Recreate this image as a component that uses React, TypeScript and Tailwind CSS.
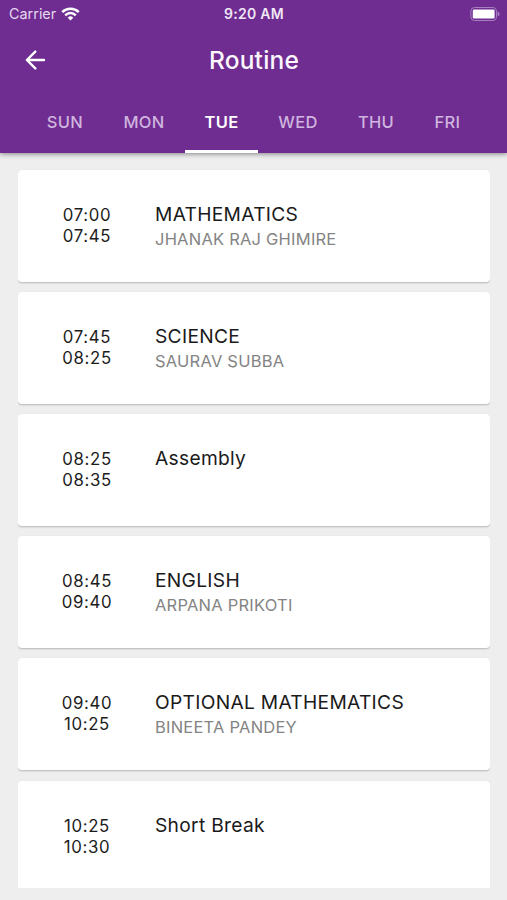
import React, { useState } from 'react';

interface Period {
  start: string;
  end: string;
  subject: string;
  teacher?: string;
}

const days = [
  { name: 'SUN', width: 'w-[76px]' },
  { name: 'MON', width: 'w-[82px]' },
  { name: 'TUE', width: 'w-[73px]' },
  { name: 'WED', width: 'w-[80px]' },
  { name: 'THU', width: 'w-[76px]' },
  { name: 'FRI', width: 'w-[67px]' },
];

const periods: Period[] = [
  { start: '07:00', end: '07:45', subject: 'MATHEMATICS', teacher: 'JHANAK RAJ GHIMIRE' },
  { start: '07:45', end: '08:25', subject: 'SCIENCE', teacher: 'SAURAV SUBBA' },
  { start: '08:25', end: '08:35', subject: 'Assembly' },
  { start: '08:45', end: '09:40', subject: 'ENGLISH', teacher: 'ARPANA PRIKOTI' },
  { start: '09:40', end: '10:25', subject: 'OPTIONAL MATHEMATICS', teacher: 'BINEETA PANDEY' },
  { start: '10:25', end: '10:30', subject: 'Short Break' },
];

const StatusBar: React.FC = () => (
  <div className="grid h-[27px] grid-cols-3 items-center pl-[9px] pr-[7px]">
    <div className="flex items-center gap-[5px]">
      <span className="text-[14.4px] leading-[27px] text-[#e6d8ef]">Carrier</span>
      <svg className="h-[14px] w-[19px]" viewBox="0 0 19 14" fill="none" stroke="#fff" strokeWidth="2.5">
        <path d="M1.2 5.1a11.8 11.8 0 0 1 16.6 0" />
        <path d="M4.2 8.3a7.5 7.5 0 0 1 10.6 0" />
        <path d="M9.5 13.5 6.7 10.7a4 4 0 0 1 5.6 0z" fill="#fff" stroke="none" />
      </svg>
    </div>
    <span className="-ml-px text-center text-[14px] font-semibold tracking-[0.3px] text-[#f0e6f6]">9:20 AM</span>
    <svg className="h-[14px] w-[30px] justify-self-end" viewBox="0 0 30 14">
      <rect x="0.9" y="0.5" width="25.6" height="13" rx="3.6" fill="none" stroke="#a57fc0" />
      <rect x="2.8" y="2.4" width="21.8" height="9.2" rx="1.4" fill="#fff" />
      <path d="M27.6 4.6v4.8c1.2-.4 2-1.3 2-2.4s-.8-2-2-2.4z" fill="#a57fc0" />
    </svg>
  </div>
);

const PeriodCard: React.FC<{ period: Period }> = ({ period }) => (
  <div className="flex h-28 shrink-0 rounded bg-white shadow-[0_1px_2px_rgba(0,0,0,0.24)]">
    <div className="w-[137px] pl-px pt-[35px] text-center text-[16.8px] leading-[21px] tracking-[0.65px] text-[#1c1c1c]">
      <p>{period.start}</p>
      <p>{period.end}</p>
    </div>
    <div className="pt-[32px]">
      <p className="text-[19.2px] leading-[25px] tracking-[0.3px] text-[#1a1a1a]">{period.subject}</p>
      {period.teacher && (
        <p className="text-[16.5px] leading-[25px] tracking-[0.22px] text-[#848484]">{period.teacher}</p>
      )}
    </div>
  </div>
);

const App: React.FC = () => {
  const [activeDay, setActiveDay] = useState('TUE');

  return (
    <div className="flex h-[900px] w-[507px] flex-col overflow-hidden bg-[#eeeeee] font-['Inter',sans-serif]">
      <header className="z-10 h-[152.5px] shrink-0 bg-[#6f2c91] shadow-[0_1px_5px_rgba(0,0,0,0.45)]">
        <StatusBar />
        <div className="grid h-[65px] grid-cols-[1fr_auto_1fr] items-center">
          <button className="ml-[25px] w-fit" aria-label="Back" onClick={() => setActiveDay('SUN')}>
            <svg
              className="h-5 w-[21px]"
              viewBox="0 0 21 20"
              fill="none"
              stroke="#fff"
              strokeWidth="2.4"
              strokeLinecap="round"
              strokeLinejoin="round"
            >
              <path d="M19 10H2M10.3 1.6 1.9 10l8.4 8.4" />
            </svg>
          </button>
          <h1 className="pl-px text-[24.5px] font-medium leading-[30px] tracking-[0.2px] text-[#fbf7fd]">Routine</h1>
        </div>
        <nav className="flex h-[60.5px] pl-[27px]">
          {days.map((day) => (
            <button
              key={day.name}
              onClick={() => setActiveDay(day.name)}
              className={`${day.width} border-b-[3px] pt-[3px] text-[16.5px] tracking-[0.3px] ${
                activeDay === day.name
                  ? 'border-white font-semibold text-white'
                  : 'border-transparent font-medium text-[#cfb5df]'
              }`}
            >
              {day.name}
            </button>
          ))}
        </nav>
      </header>

      <main className="ml-[18px] mr-[17px] mb-3 flex flex-1 flex-col gap-[10.2px] overflow-hidden [clip-path:inset(0_-8px)] pt-[17.1px]">
        {periods.map((period) => (
          <PeriodCard key={period.start} period={period} />
        ))}
      </main>
    </div>
  );
};

export default App;
